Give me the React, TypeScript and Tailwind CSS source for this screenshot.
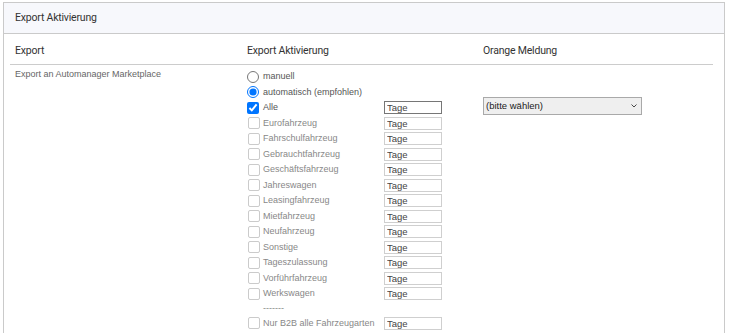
const kinds = [
  "Eurofahrzeug",
  "Fahrschulfahrzeug",
  "Gebrauchtfahrzeug",
  "Geschäftsfahrzeug",
  "Jahreswagen",
  "Leasingfahrzeug",
  "Mietfahrzeug",
  "Neufahrzeug",
  "Sonstige",
  "Tageszulassung",
  "Vorführfahrzeug",
  "Werkswagen",
];

function TageInput({ enabled }: { enabled?: boolean }) {
  return (
    <input
      type="text"
      defaultValue="Tage"
      readOnly
      className={`ml-auto mr-[36px] w-[58px] h-[13px] px-[2px] text-[9.5px] leading-none text-[#444] bg-white outline-none border ${
        enabled ? "border-[#767676]" : "border-[#cfcfcf]"
      }`}
    />
  );
}

function KindRow({ label, checked }: { label: string; checked?: boolean }) {
  return (
    <div className="flex items-center h-[15.5px]">
      {checked ? (
        <input type="checkbox" defaultChecked className="m-0 w-[12px] h-[12px] accent-[#0075ff]" />
      ) : (
        <span className="ml-[1px] w-[12px] h-[12px] bg-white border border-[#cbcbcb] rounded-[2px]" />
      )}
      <span className={`${checked ? "ml-[4px] text-[#555]" : "ml-[3px] text-[#888]"}`}>{label}</span>
      <TageInput enabled={checked} />
    </div>
  );
}

export default function App() {
  return (
    <div
      className="w-[734px] h-[333px] bg-white overflow-hidden pt-[2px] pl-[3px]"
      style={{ fontFamily: '"Liberation Sans", Arial, sans-serif' }}
    >
      <div className="w-[722px] h-[340px] border border-[#cacaca]">
        {/* Panel Header */}
        <div
          className="h-[31px] bg-[#f7f8fc] border-b border-[#cacaca] flex items-center pl-[11px] text-[10.5px] tracking-[-0.2px] text-[#333]"
          style={{ fontFamily: 'Roboto, sans-serif' }}
        >
          Export Aktivierung
        </div>

        <div className="ml-[6px] w-[703px]">
          {/* Column Headers */}
          <div
            className="grid grid-cols-[232px_236px_1fr] h-[31px] items-end border-b border-[#cccccc] text-[10.5px] leading-[12px] tracking-[-0.2px] text-[#333] pb-[7px]"
            style={{ fontFamily: 'Roboto, sans-serif' }}
          >
            <div className="pl-[5px]">Export</div>
            <div className="pl-[5px]">Export Aktivierung</div>
            <div className="pl-[5px]">Orange Meldung</div>
          </div>

          {/* Row */}
          <div className="grid grid-cols-[232px_236px_1fr] text-[9px]">
            <div className="pl-[5px] pt-[3px] text-[#666]">Export an Automanager Marketplace</div>

            <div className="pl-[5px] pt-[4px]">
              <label className="flex items-center h-[15.5px] text-[#555]">
                <input type="radio" name="mode" className="m-0 w-[12px] h-[12px]" />
                <span className="ml-[4px]">manuell</span>
              </label>
              <label className="flex items-center h-[15.5px] text-[#555]">
                <input type="radio" name="mode" defaultChecked className="m-0 w-[12px] h-[12px] accent-[#0075ff]" />
                <span className="ml-[4px]">automatisch (empfohlen)</span>
              </label>
              <KindRow label="Alle" checked />
              {kinds.map((k) => (
                <KindRow key={k} label={k} />
              ))}
              <div className="flex items-center h-[14px] pl-[16px] text-[#888]">-------</div>
              <KindRow label="Nur B2B alle Fahrzeugarten" />
            </div>

            <div className="pl-[5px] pt-[32px]">
              <div className="relative w-[159px] h-[18px]">
                <select className="appearance-none w-full h-full bg-[#efefef] border border-[#a9a9a9] text-[9.5px] font-normal text-[#222] pl-[2px] outline-none">
                  <option>(bitte wählen)</option>
                </select>
                <svg
                  className="absolute right-[5px] top-[7px] pointer-events-none"
                  width="6"
                  height="4"
                  viewBox="0 0 6 4"
                >
                  <path d="M0.5 0.5 L3 3 L5.5 0.5" fill="none" stroke="#333" strokeWidth="0.9" />
                </svg>
              </div>
            </div>
          </div>
        </div>
      </div>
    </div>
  );
}
